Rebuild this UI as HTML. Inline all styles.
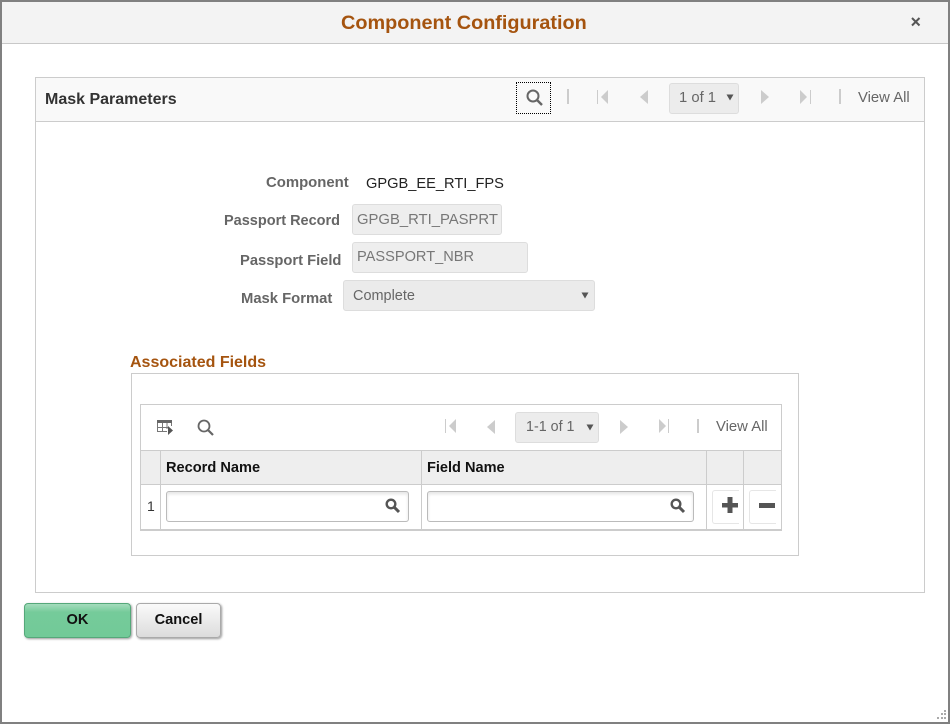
<!DOCTYPE html>
<html>
<head>
<meta charset="utf-8">
<style>
html,body{margin:0;padding:0;background:#fff}
body{width:950px;height:724px;position:relative;overflow:hidden;font-family:"Liberation Sans",sans-serif;font-size:14px;color:#333}
.a{position:absolute;box-sizing:border-box}
.t{position:absolute;white-space:nowrap;line-height:16px}
.lbl{font-weight:bold;color:#666}
.inp{position:absolute;box-sizing:border-box;background:#eee;border:1px solid #ddd;border-radius:3px;color:#777;padding-left:4px;white-space:nowrap}
.th{font-weight:bold;color:#111}
svg{position:absolute;overflow:visible}
</style>
</head>
<body>
<!-- window frame -->
<div class="a" style="left:0;top:0;width:950px;height:724px;border:2px solid #808080"></div>
<div class="a" style="left:2px;top:2px;width:946px;height:42px;background:#f3f3f3;border-bottom:1px solid #c8c8c8"></div>
<div class="t" style="left:341px;top:12px;font-size:19.85px;line-height:23px;font-weight:bold;color:#a5540f">Component Configuration</div>
<svg style="left:911px;top:17px" width="10" height="10"><path d="M1 1L8.500 8.500M8.500 1L1 8.500" stroke="#555" stroke-width="2"/></svg>

<!-- Main panel -->
<div class="a" style="left:35px;top:77px;width:890px;height:516px;border:1px solid #ccc"></div>
<div class="a" style="left:36px;top:78px;width:888px;height:44px;background:#f9f9f9;border-bottom:1px solid #ccc"></div>
<div class="t" style="left:45px;top:92px;font-size:16px;font-weight:bold;color:#333">Mask Parameters</div>

<div class="a" style="left:516px;top:82px;width:35px;height:32px;border:1px dotted #000"></div>
<svg style="left:526px;top:89px" width="17" height="17"><circle cx="7" cy="7" r="5.500" fill="none" stroke="#666" stroke-width="2"/><path d="M11 11L16 16" stroke="#666" stroke-width="2.400"/></svg>
<div class="a" style="left:567px;top:89px;width:2px;height:15px;background:#ccc"></div>
<svg style="left:597px;top:90px" width="12" height="14"><path d="M0.500 0V14" stroke="#ccc" stroke-width="1"/><path d="M11 0V14L4 7Z" fill="#ccc"/></svg>
<svg style="left:639px;top:90px" width="10" height="14"><path d="M9 0V14L1 7Z" fill="#ccc"/></svg>
<div class="a" style="left:669px;top:83px;width:70px;height:31px;background:#ececec;border:1px solid #ddd;border-radius:3px"></div>
<div class="t" style="left:679px;top:90px;color:#666;font-size:14.8px">1 of 1</div>
<svg style="left:726px;top:94px" width="8" height="7"><path d="M0.500 0.500H7.500L4 6.500Z" fill="#555"/></svg>
<svg style="left:761px;top:90px" width="10" height="14"><path d="M0 0V14L8 7Z" fill="#ccc"/></svg>
<svg style="left:800px;top:90px" width="12" height="14"><path d="M0 0V14L7 7Z" fill="#ccc"/><path d="M10.500 0V14" stroke="#ccc" stroke-width="1"/></svg>
<div class="a" style="left:839px;top:89px;width:2px;height:15px;background:#ccc"></div>
<div class="t" style="left:858px;top:90px;color:#666;font-size:14.85px">View All</div>

<!-- form -->
<div class="t lbl" style="left:266px;top:175px;font-size:14.9px">Component</div>
<div class="t" style="left:366px;top:176px;color:#222;font-size:14.64px">GPGB_EE_RTI_FPS</div>
<div class="t lbl" style="left:224px;top:213px;font-size:14.5px">Passport Record</div>
<div class="inp" style="left:352px;top:204px;width:150px;height:31px;line-height:30px;font-size:14.84px">GPGB_RTI_PASPRT</div>
<div class="t lbl" style="left:240px;top:253px;font-size:14.73px">Passport Field</div>
<div class="inp" style="left:352px;top:242px;width:176px;height:31px;line-height:29px;font-size:14.6px">PASSPORT_NBR</div>
<div class="t lbl" style="left:241px;top:291px;font-size:14.8px">Mask Format</div>
<div class="inp" style="left:343px;top:280px;width:252px;height:31px;line-height:30px;padding-left:9px;background:#ebebeb;color:#666;font-size:14.47px">Complete</div>
<svg style="left:581px;top:292px" width="8" height="7"><path d="M0.500 0.500H7.500L4 6.500Z" fill="#555"/></svg>

<!-- Associated -->
<div class="t" style="left:130px;top:355px;font-size:16px;font-weight:bold;color:#a5540f">Associated Fields</div>
<div class="a" style="left:131px;top:373px;width:668px;height:183px;border:1px solid #ccc"></div>
<div class="a" style="left:140px;top:404px;width:642px;height:127px;border:1px solid #ccc;border-bottom:2px solid #ccc"></div>

<svg style="left:157px;top:420px" width="17" height="16"><path d="M0 0H15V3H0Z" fill="#666"/><path d="M0.500 3V11.500H10M14.500 3V6M5.500 3V11.500M10 3V9M0.500 7.500H11" stroke="#777" stroke-width="1" fill="none"/><path d="M11 6L16 10.500L11 15Z" fill="#555"/></svg>
<svg style="left:197px;top:419px" width="17" height="17"><circle cx="7" cy="7" r="5.500" fill="none" stroke="#666" stroke-width="1.800"/><path d="M11 11L16 16" stroke="#666" stroke-width="2.200"/></svg>

<svg style="left:445px;top:419px" width="12" height="14"><path d="M0.500 0V14" stroke="#ccc" stroke-width="1"/><path d="M11 0V14L4 7Z" fill="#ccc"/></svg>
<svg style="left:486px;top:420px" width="10" height="14"><path d="M9 0V14L1 7Z" fill="#ccc"/></svg>
<div class="a" style="left:515px;top:412px;width:84px;height:31px;background:#ececec;border:1px solid #ddd;border-radius:3px"></div>
<div class="t" style="left:526px;top:419px;color:#666;font-size:14.3px">1-1 of 1</div>
<svg style="left:586px;top:424px" width="8" height="7"><path d="M0.500 0.500H7.500L4 6.500Z" fill="#555"/></svg>
<svg style="left:620px;top:420px" width="10" height="14"><path d="M0 0V14L8 7Z" fill="#ccc"/></svg>
<svg style="left:659px;top:419px" width="12" height="14"><path d="M0 0V14L7 7Z" fill="#ccc"/><path d="M9.500 0V14" stroke="#ccc" stroke-width="1"/></svg>
<div class="a" style="left:697px;top:419px;width:2px;height:14px;background:#ccc"></div>
<div class="t" style="left:716px;top:419px;color:#666;font-size:14.85px">View All</div>

<!-- table -->
<div class="a" style="left:141px;top:450px;width:640px;height:35px;background:#eee;border-top:1px solid #ccc;border-bottom:1px solid #ccc"></div>
<div class="a" style="left:160px;top:450px;width:1px;height:80px;background:#ccc"></div>
<div class="a" style="left:421px;top:450px;width:1px;height:80px;background:#ccc"></div>
<div class="a" style="left:706px;top:450px;width:1px;height:80px;background:#ccc"></div>
<div class="a" style="left:743px;top:450px;width:1px;height:80px;background:#ccc"></div>
<div class="t th" style="left:166px;top:460px;font-size:14.6px">Record Name</div>
<div class="t th" style="left:427px;top:460px;font-size:14.56px">Field Name</div>
<div class="t" style="left:147px;top:498px;color:#333">1</div>

<div class="a" style="left:166px;top:491px;width:243px;height:31px;background:#fff;border:1px solid #bbb;border-radius:3px;box-shadow:inset 0 2px 3px #e4e4e4"></div>
<svg style="left:385px;top:498px" width="15" height="15"><circle cx="6" cy="6" r="4.300" fill="none" stroke="#555" stroke-width="2.400"/><path d="M9.500 9.500L14 14" stroke="#555" stroke-width="3"/></svg>
<div class="a" style="left:427px;top:491px;width:267px;height:31px;background:#fff;border:1px solid #bbb;border-radius:3px;box-shadow:inset 0 2px 3px #e4e4e4"></div>
<svg style="left:670px;top:498px" width="15" height="15"><circle cx="6" cy="6" r="4.300" fill="none" stroke="#555" stroke-width="2.400"/><path d="M9.500 9.500L14 14" stroke="#555" stroke-width="3"/></svg>

<div class="a" style="left:712px;top:490px;width:27px;height:34px;background:#fff;border:1px solid #e6e6e6;border-right:0;border-radius:3px 0 0 3px"></div>
<svg style="left:722px;top:497px" width="16" height="16"><path d="M0 6H16V10.500H0Z M5.500 0H10.500V16H5.500Z" fill="#555"/></svg>
<div class="a" style="left:749px;top:490px;width:27px;height:34px;background:#fff;border:1px solid #e6e6e6;border-right:0;border-radius:3px 0 0 3px"></div>
<svg style="left:759px;top:503px" width="16" height="6"><path d="M0 0H16V5H0Z" fill="#555"/></svg>

<!-- buttons -->
<div class="a" style="left:24px;top:603px;width:107px;height:35px;border:1px solid #55a87a;border-radius:4px;background:linear-gradient(#a4dcbc 0,#75cb9a 25%,#72ca98 100%);box-shadow:1px 1px 2px #999;text-align:center;line-height:32px;font-weight:bold;color:#111;font-size:14.6px">OK</div>
<div class="a" style="left:136px;top:603px;width:85px;height:35px;border:1px solid #aaa;border-radius:4px;background:linear-gradient(#fafafa,#dcdcdc);box-shadow:1px 1px 2px #999;text-align:center;line-height:32px;font-weight:bold;color:#111;font-size:14.6px">Cancel</div>

<!-- resize grip -->
<svg style="left:936px;top:709px" width="12" height="12"><path d="M8 1h2v2H8zM5 4h2v2H5zM8 4h2v2H8zM1 8h2v2H1zM5 8h2v2H5zM8 8h2v2H8z" fill="#aaa"/></svg>
</body>
</html>
